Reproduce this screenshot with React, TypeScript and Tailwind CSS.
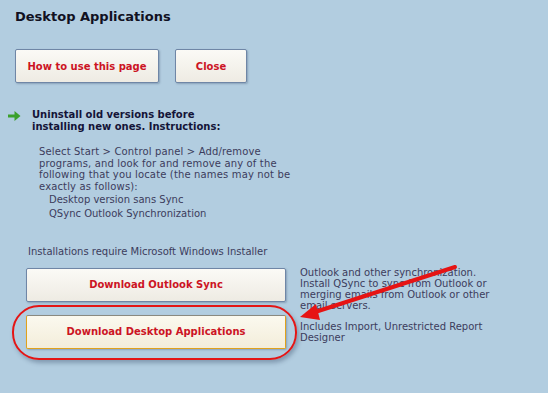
import React from 'react';

const font = { fontFamily: '"DejaVu Sans", Verdana, sans-serif' };

function Btn({ label, w, gold }: { label: string; w: string; gold?: boolean }) {
  return (
    <div
      className={`${w} h-[34px] flex items-center justify-center rounded-[2px] border shadow-[1px_1px_2px_rgba(60,80,110,0.35)] ${
        gold
          ? 'border-[#e0a21c] border-t-[#8a8a80] bg-gradient-to-b from-[#fbf9ef] to-[#f3edda]'
          : 'border-[#6f86a6] bg-gradient-to-b from-[#fbfaf6] to-[#eeebe3]'
      }`}
    >
      <span className="text-[#cc1424] font-bold text-[10px]">{label}</span>
    </div>
  );
}

export default function App() {
  return (
    <div className="relative w-[548px] h-[393px] overflow-hidden bg-[#b2cde0]" style={font}>
      <h1 className="pl-[15px] pt-[9px] text-[13px] font-bold text-[#111122] leading-[16px]">Desktop Applications</h1>

      <div className="flex gap-[16px] pl-[15px] mt-[24px]">
        <Btn label="How to use this page" w="w-[144px]" />
        <Btn label="Close" w="w-[72px]" />
      </div>

      <div className="flex items-start pl-[8px] mt-[26px]">
        <svg width="13" height="10" viewBox="0 0 13 10" className="mt-[2px]">
          <path d="M0 3.5 H6.5 V0 L12.5 5 L6.5 10 V6.5 H0 Z" fill="#3ba02c" />
        </svg>
        <p className="ml-[11px] text-[10px] font-bold leading-[12px] text-[#141438]">
          Uninstall old versions before
          <br />
          installing new ones. Instructions:
        </p>
      </div>

      <p className="pl-[39px] mt-[13px] text-[10px] leading-[11.7px] tracking-[0.15px] text-[#3c3c5c]">
        Select Start &gt; Control panel &gt; Add/remove
        <br />
        programs, and look for and remove any of the
        <br />
        following that you locate (the names may not be
        <br />
        exactly as follows):
      </p>

      <div className="pl-[49px] mt-0 text-[10px] leading-[14px] text-[#3c3c5c]">
        <div>Desktop version sans Sync</div>
        <div>QSync Outlook Synchronization</div>
      </div>

      <p className="pl-[28px] mt-[25px] text-[10px] leading-[12px] text-[#3c3c5c]">
        Installations require Microsoft Windows Installer
      </p>

      <div className="grid grid-cols-[260px_1fr] grid-rows-[34px_34px] gap-y-[13px] gap-x-[14px] pl-[26px] mt-[10px]">
        <Btn label="Download Outlook Sync" w="w-[260px]" />
        <p className="text-[10px] leading-[11px] text-[#3c3c5c] -mt-[1px] whitespace-nowrap">
          Outlook and other synchronization.
          <br />
          Install QSync to sync from Outlook or
          <br />
          merging emails from Outlook or other
          <br />
          email servers.
        </p>
        <Btn label="Download Desktop Applications" w="w-[260px]" gold />
        <p className="text-[10px] leading-[11px] text-[#3c3c5c] mt-[6px] whitespace-nowrap">
          Includes Import, Unrestricted Report
          <br />
          Designer
        </p>
      </div>

      {/* annotation */}
      <div className="absolute left-[12px] top-[305px] w-[285px] h-[55px] rounded-[27px] border-2 border-[#e41515] shadow-[2px_3px_4px_rgba(40,60,90,0.35)]" />
      <svg className="absolute left-0 top-0" width="548" height="393">
        <line x1="455" y1="267" x2="312" y2="313" stroke="#e61414" strokeWidth="4" strokeLinecap="round" />
        <path d="M300 317 L316 304 L320 320 Z" fill="#e61414" />
      </svg>
    </div>
  );
}
